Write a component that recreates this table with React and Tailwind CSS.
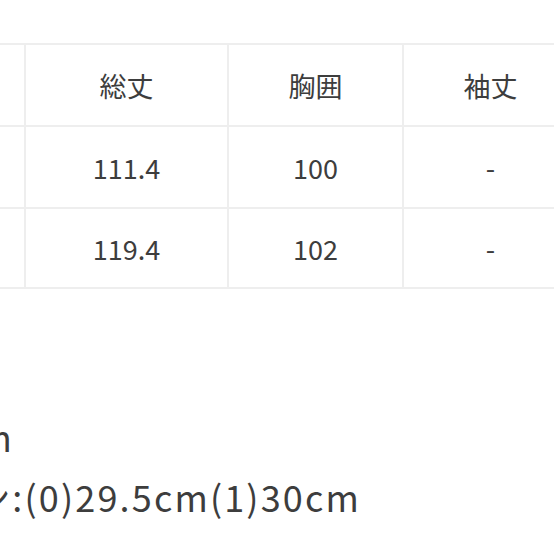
const headers = ['サイズ', '総丈', '胸囲', '袖丈'];
const rows = [
  ['(0)', '111.4', '100', '-'],
  ['(1)', '119.4', '102', '-'],
];

const widths = ['w-[150px]', 'w-[203px]', 'w-[175px]', 'w-[175px]'];

function Row({ cells, last }) {
  return (
    <div className={`flex h-[82px] border-t-2 border-[#eeeeee] ${last ? 'border-b-2' : ''}`}>
      {cells.map((c, i) => (
        <div
          key={i}
          className={`${widths[i]} shrink-0 flex items-center justify-center ${i > 0 ? 'border-l-2 border-[#eeeeee]' : ''}`}
        >
          {c}
        </div>
      ))}
    </div>
  );
}

export default function App() {
  return (
    <div
      className="w-[554px] h-[554px] overflow-hidden bg-white text-[#3d3d3d]"
      style={{ fontFamily: '"Noto Sans CJK JP", "Noto Sans", sans-serif' }}
    >
      <div className="mt-[43px] -ml-[126px] text-[27px] leading-none">
        <Row cells={headers} />
        {rows.map((r, i) => (
          <Row key={i} cells={r} last={i === rows.length - 1} />
        ))}
      </div>

      <div className="mt-[117px] text-[36px] leading-[60px] tracking-[0.06em] whitespace-nowrap">
        <div className="w-[14px] flex justify-end">着丈:75cm</div>
        <div className="w-[361px] flex justify-end">ウエストゴム込みベルト丈ン:(0)29.5cm(1)30cm</div>
      </div>
    </div>
  );
}
